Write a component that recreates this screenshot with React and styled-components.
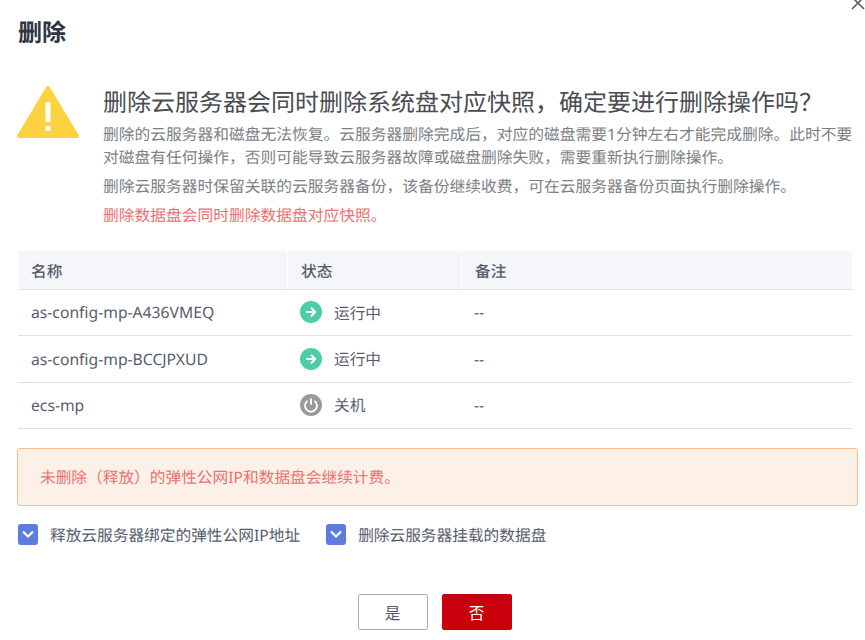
import React from "react";
import styled, { createGlobalStyle } from "styled-components";

const GlobalStyle = createGlobalStyle`
  html, body {
    margin: 0;
    padding: 0;
    background: #fff;
    font-family: "Noto Sans", "Noto Sans CJK SC", sans-serif;
    text-rendering: geometricPrecision;
  }
`;

const Dialog = styled.div`
  position: relative;
  width: 865px;
  height: 640px;
  overflow: hidden;
  box-sizing: border-box;
  padding: 17px 7px 0 17px;
  background: #fff;
`;

const CloseIcon = styled.svg`
  position: absolute;
  top: -4px;
  right: 0;
  width: 14px;
  height: 14px;
`;

const Title = styled.h1`
  margin: 0 0 0 1px;
  font-size: 24px;
  line-height: 32px;
  font-weight: 700;
  color: #2f3542;
`;

const Notice = styled.div`
  display: flex;
  margin-top: 37px;
`;

const WarnIcon = styled.svg`
  flex: none;
  width: 62px;
  height: 54px;
`;

const NoticeBody = styled.div`
  margin-left: 24px;
  flex: 1;
`;

const Heading = styled.div`
  margin-bottom: 3px;
  font-size: 24px;
  line-height: 34px;
  color: #4a4c52;
  white-space: nowrap;
`;

const Para = styled.p`
  margin: 0 0 6px;
  font-size: 15.75px;
  line-height: 23px;
  color: ${(p) => (p.$danger ? "#ec7172" : "#7c7f86")};
`;

const Table = styled.div`
  margin: 18px 6px 0 1px;
  font-size: 15.7px;
  color: #575d6c;
`;

const Row = styled.div`
  display: grid;
  grid-template-columns: 269px 174px 1fr;
  height: ${(p) => (p.$head ? "39px" : "46.4px")};
  align-items: center;
  box-sizing: border-box;
  background: ${(p) => (p.$head ? "#f4f6fa" : "#fff")};
  border-bottom: 1px solid #dfe1e6;
`;

const HeadCell = styled.div`
  height: 100%;
  display: flex;
  align-items: center;
  padding-left: 13px;
  font-weight: 500;
  color: #575d6c;
  border-left: ${(p) => (p.$first ? "none" : "1px solid #fff")};
`;

const Cell = styled.div`
  display: flex;
  align-items: center;
  padding: 0 0 1px 13px;
  gap: 12px;
`;

const StatusIcon = styled.svg`
  width: 22px;
  height: 22px;
`;

const Alert = styled.div`
  margin-top: 19px;
  height: 58px;
  box-sizing: border-box;
  display: flex;
  align-items: center;
  padding: 0 0 2px 22px;
  font-size: 15.7px;
  color: #ec7172;
  background: #fdf1e7;
  border: 1.5px solid #f6bd88;
  border-radius: 3px;
`;

const Options = styled.div`
  display: flex;
  gap: 26px;
  margin: 17px 0 0 1px;
`;

const Option = styled.label`
  display: flex;
  align-items: center;
  gap: 12px;
  height: 22px;
  font-size: 15.7px;
  color: #575d6c;
`;

const CheckBox = styled.span`
  display: flex;
  align-items: center;
  justify-content: center;
  width: 20px;
  height: 21px;
  border-radius: 3px;
  background: #5e7ce0;
`;

const Footer = styled.div`
  display: flex;
  justify-content: center;
  gap: 14px;
  margin-top: 49px;
  margin-right: 6px;
`;

const Button = styled.button`
  width: 70px;
  height: 36px;
  box-sizing: border-box;
  padding: 0;
  border-radius: 2px;
  font-family: inherit;
  font-size: 15.7px;
  color: ${(p) => (p.$primary ? "#fff" : "#575d6c")};
  background: ${(p) => (p.$primary ? "#c7000b" : "#fff")};
  border: 1px solid ${(p) => (p.$primary ? "#c7000b" : "#adb0b8")};
`;

function RunningIcon() {
  return (
    <StatusIcon viewBox="0 0 22 22">
      <circle cx="11" cy="11" r="11" fill="#4ccda6" />
      <path d="M6 11h9M11 6.8 15.2 11 11 15.2" fill="none" stroke="#fff" strokeWidth="2" />
    </StatusIcon>
  );
}

function StoppedIcon() {
  return (
    <StatusIcon viewBox="0 0 22 22">
      <circle cx="11" cy="11" r="11" fill="#9a9a9a" />
      <path d="M7.6 6.8a6 6 0 1 0 6.8 0" fill="none" stroke="#fff" strokeWidth="1.8" />
      <path d="M11 4.5v6" stroke="#fff" strokeWidth="2" />
    </StatusIcon>
  );
}

function Check() {
  return (
    <svg width="14" height="12" viewBox="0 0 14 12">
      <path d="M2 3.5 7 8.5 12 3.5" fill="none" stroke="#fff" strokeWidth="2.2" />
    </svg>
  );
}

const rows = [
  { name: "as-config-mp-A436VMEQ", running: true },
  { name: "as-config-mp-BCCJPXUD", running: true },
  { name: "ecs-mp", running: false },
];

export default function App() {
  return (
    <Dialog>
      <GlobalStyle />
      <CloseIcon viewBox="0 0 14 14">
        <path d="M1 1 13 13M13 1 1 13" stroke="#575d6c" strokeWidth="1.6" />
      </CloseIcon>
      <Title>删除</Title>
      <Notice>
        <WarnIcon viewBox="0 0 62 54">
          <path
            d="M31 2 60 50H2Z"
            fill="#fdd240"
            stroke="#fdd240"
            strokeWidth="4"
            strokeLinejoin="round"
          />
          <rect x="28.5" y="16" width="5" height="20" fill="#fff" />
          <rect x="28.5" y="40" width="5" height="5" fill="#fff" />
        </WarnIcon>
        <NoticeBody>
          <Heading>删除云服务器会同时删除系统盘对应快照，确定要进行删除操作吗？</Heading>
          <Para>
            删除的云服务器和磁盘无法恢复。云服务器删除完成后，对应的磁盘需要1分钟左右才能完成删除。此时不要对磁盘有任何操作，否则可能导致云服务器故障或磁盘删除失败，需要重新执行删除操作。
          </Para>
          <Para>删除云服务器时保留关联的云服务器备份，该备份继续收费，可在云服务器备份页面执行删除操作。</Para>
          <Para $danger>删除数据盘会同时删除数据盘对应快照。</Para>
        </NoticeBody>
      </Notice>
      <Table>
        <Row $head>
          <HeadCell $first>名称</HeadCell>
          <HeadCell>状态</HeadCell>
          <HeadCell>备注</HeadCell>
        </Row>
        {rows.map((row) => (
          <Row key={row.name}>
            <Cell>{row.name}</Cell>
            <Cell>
              {row.running ? <RunningIcon /> : <StoppedIcon />}
              {row.running ? "运行中" : "关机"}
            </Cell>
            <Cell>--</Cell>
          </Row>
        ))}
      </Table>
      <Alert>未删除（释放）的弹性公网IP和数据盘会继续计费。</Alert>
      <Options>
        <Option>
          <CheckBox>
            <Check />
          </CheckBox>
          释放云服务器绑定的弹性公网IP地址
        </Option>
        <Option>
          <CheckBox>
            <Check />
          </CheckBox>
          删除云服务器挂载的数据盘
        </Option>
      </Options>
      <Footer>
        <Button>是</Button>
        <Button $primary>否</Button>
      </Footer>
    </Dialog>
  );
}
